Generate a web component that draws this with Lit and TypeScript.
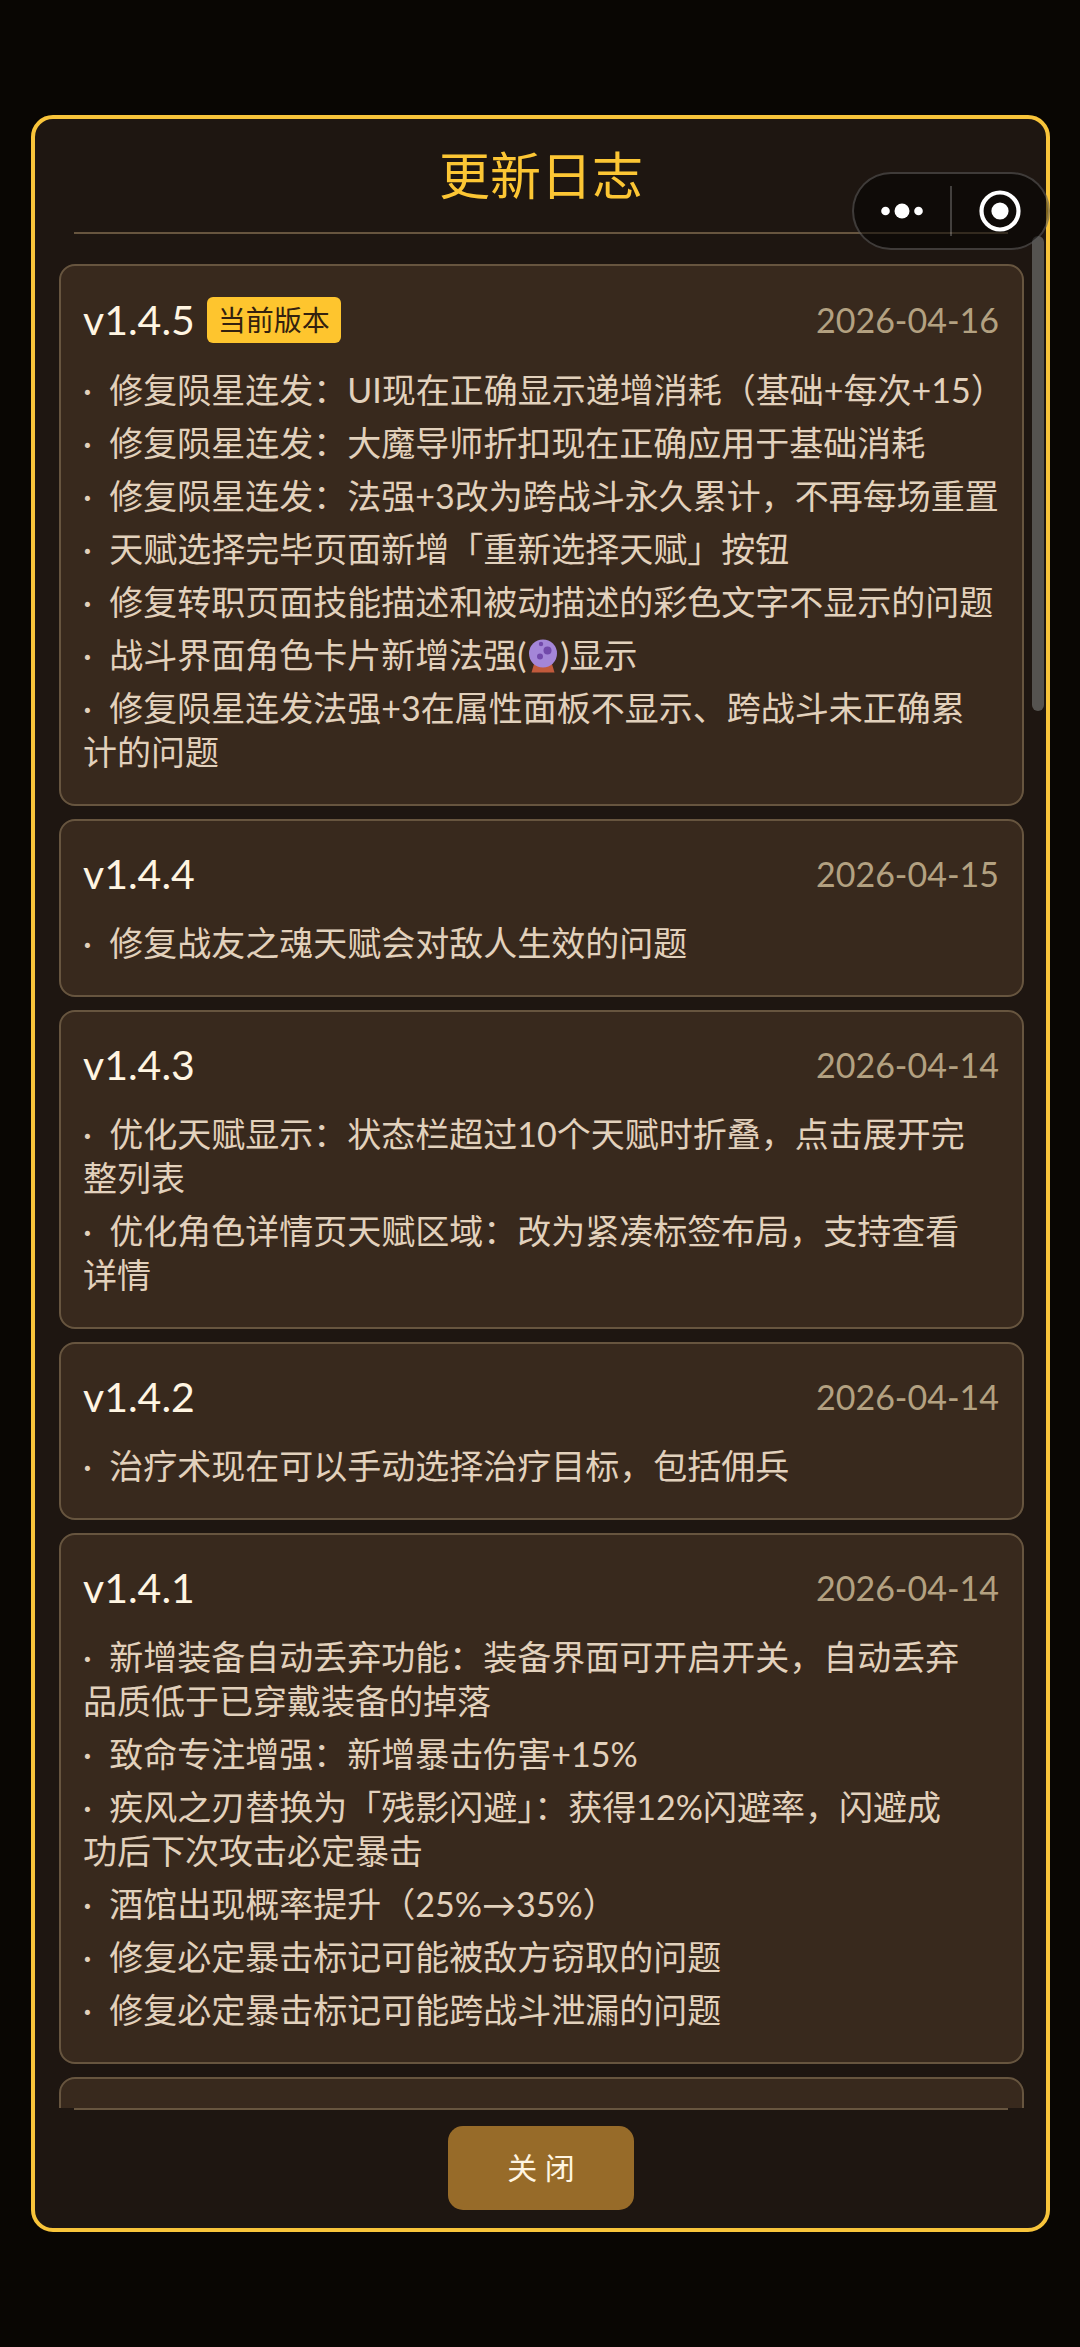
import { LitElement, html, css, svg } from "lit";
import { customElement, property } from "lit/decorators.js";

interface Release {
  version: string;
  date: string;
  current?: boolean;
  notes: string[];
}

/* A line feed inside a note is a forced line break; {orb} stands for the spell-power icon. */
const RELEASES: Release[] = [
  {
    version: "v1.4.5",
    date: "2026-04-16",
    current: true,
    notes: [
      "修复陨星连发：UI现在正确显示递增消耗（基础+每次+15）",
      "修复陨星连发：大魔导师折扣现在正确应用于基础消耗",
      "修复陨星连发：法强+3改为跨战斗永久累计，不再每场重置",
      "天赋选择完毕页面新增「重新选择天赋」按钮",
      "修复转职页面技能描述和被动描述的彩色文字不显示的问题",
      "战斗界面角色卡片新增法强({orb})显示",
      "修复陨星连发法强+3在属性面板不显示、跨战斗未正确累\n计的问题",
    ],
  },
  {
    version: "v1.4.4",
    date: "2026-04-15",
    notes: ["修复战友之魂天赋会对敌人生效的问题"],
  },
  {
    version: "v1.4.3",
    date: "2026-04-14",
    notes: [
      "优化天赋显示：状态栏超过10个天赋时折叠，点击展开完\n整列表",
      "优化角色详情页天赋区域：改为紧凑标签布局，支持查看\n详情",
    ],
  },
  {
    version: "v1.4.2",
    date: "2026-04-14",
    notes: ["治疗术现在可以手动选择治疗目标，包括佣兵"],
  },
  {
    version: "v1.4.1",
    date: "2026-04-14",
    notes: [
      "新增装备自动丢弃功能：装备界面可开启开关，自动丢弃\n品质低于已穿戴装备的掉落",
      "致命专注增强：新增暴击伤害+15%",
      "疾风之刃替换为「残影闪避」：获得12%闪避率，闪避成\n功后下次攻击必定暴击",
      "酒馆出现概率提升（25%→35%）",
      "修复必定暴击标记可能被敌方窃取的问题",
      "修复必定暴击标记可能跨战斗泄漏的问题",
    ],
  },
];

const orb = html`<svg class="orb" viewBox="0 0 34 34" role="img" aria-label="🔮">
  ${svg`
    <path d="M8 25 H26 L28.5 33.5 H5.5 Z" fill="#c25a3c"></path>
    <circle cx="17" cy="14.5" r="14" fill="#a486d8"></circle>
    <circle cx="15" cy="5" r="2.2" fill="#7249ab"></circle>
    <circle cx="21.5" cy="11.5" r="4" fill="#7249ab"></circle>
    <circle cx="14" cy="17.5" r="3" fill="#7249ab"></circle>
  `}
</svg>`;

@customElement("release-card")
export class ReleaseCard extends LitElement {
  @property({ attribute: false }) release?: Release;

  static styles = css`
    :host {
      display: block;
      flex: none;
      box-sizing: border-box;
      min-height: 178px;
      padding: 31px 23px 30px 22px;
      border: 2px solid #67553f;
      border-radius: 16px;
      background: #38291d;
    }
    .head {
      display: flex;
      align-items: center;
      justify-content: space-between;
      margin-bottom: 25px;
    }
    .name {
      display: flex;
      align-items: center;
      gap: 12px;
    }
    .version {
      margin: 0;
      font-size: 41px;
      font-weight: 400;
      line-height: 44px;
      color: #fff5e2;
    }
    .badge {
      padding: 0 11px;
      border-radius: 6px;
      background: #fec52e;
      color: #33210f;
      font-size: 28px;
      line-height: 46px;
    }
    .date {
      font-size: 34px;
      line-height: 44px;
      color: #b3a181;
    }
    .notes {
      display: flex;
      flex-direction: column;
      gap: 9px;
      margin: 0;
      padding: 0;
      list-style: none;
    }
    .note {
      white-space: pre;
      font-size: 34px;
      line-height: 44px;
      color: #e2d1bc;
    }
    .orb {
      width: 34px;
      height: 34px;
      vertical-align: -5px;
    }
  `;

  private note(text: string) {
    const [before, after] = `·  ${text}`.split("{orb}");
    return html`<li class="note">${before}${after === undefined ? "" : html`${orb}${after}`}</li>`;
  }

  render() {
    const r = this.release;
    if (!r) return html``;
    return html`
      <div class="head">
        <div class="name">
          <h2 class="version">${r.version}</h2>
          ${r.current ? html`<span class="badge">当前版本</span>` : ""}
        </div>
        <time class="date" datetime=${r.date}>${r.date}</time>
      </div>
      <ul class="notes">
        ${r.notes.map((n) => this.note(n))}
      </ul>
    `;
  }
}

@customElement("app-root")
export class AppRoot extends LitElement {
  static styles = css`
    :host {
      display: block;
      position: relative;
      box-sizing: border-box;
      height: 100vh;
      padding: 115px 30px 115px 31px;
      background: #090603;
      font-family: Lato, "Noto Sans CJK SC", sans-serif;
    }
    .panel {
      display: flex;
      flex-direction: column;
      box-sizing: border-box;
      height: 100%;
      border: 4px solid #f8c43a;
      border-radius: 22px;
      background: #1e1611;
    }
    .top {
      margin: 0 38px 0 39px;
      padding: 20px 0 19px;
      border-bottom: 2px solid #67553f;
    }
    .title {
      margin: 0;
      text-align: center;
      font-size: 51px;
      font-weight: 400;
      line-height: 74px;
      color: #fcc634;
    }
    .body {
      position: relative;
      display: flex;
      flex: 1;
      min-height: 0;
    }
    .list {
      display: flex;
      flex: 1;
      flex-direction: column;
      gap: 13px;
      padding: 30px 22px 0 24px;
      overflow-y: auto;
      scrollbar-width: none;
    }
    .thumb {
      position: absolute;
      top: 2px;
      right: 2px;
      width: 12px;
      height: 475px;
      border-radius: 6px;
      background: #555350;
    }
    .foot {
      display: flex;
      justify-content: center;
      margin: 0 38px 0 39px;
      padding: 16px 0 18px;
      border-top: 2px solid #67553f;
    }
    .close {
      min-width: 186px;
      height: 84px;
      padding: 0 0 4px;
      border: 0;
      border-radius: 15px;
      background: #976b29;
      color: #fff5e2;
      font: inherit;
      font-size: 30px;
      cursor: pointer;
    }
    .capsule {
      position: absolute;
      top: 172px;
      right: 30px;
      display: flex;
      align-items: center;
      box-sizing: border-box;
      width: 198px;
      height: 78px;
      border: 2px solid rgba(255, 255, 255, 0.2);
      border-radius: 39px;
      background: rgba(0, 0, 0, 0.5);
    }
    .tool {
      display: flex;
      flex: 1;
      align-items: center;
      justify-content: center;
      height: 100%;
      padding: 0;
      border: 0;
      background: none;
      cursor: pointer;
    }
    .rule {
      width: 2px;
      height: 50px;
      background: rgba(255, 255, 255, 0.22);
    }
  `;

  render() {
    return html`
      <main class="panel" lang="zh-CN">
        <header class="top"><h1 class="title">更新日志</h1></header>
        <div class="body">
          <div class="list">
            ${RELEASES.map((r) => html`<release-card .release=${r}></release-card>`)}
            <release-card></release-card>
          </div>
          <div class="thumb"></div>
        </div>
        <footer class="foot"><button class="close" type="button">关 闭</button></footer>
      </main>
      <div class="capsule">
        <button class="tool" type="button" aria-label="更多">
          <svg width="44" height="44" viewBox="0 0 44 44" fill="#fff">
            <circle cx="5.5" cy="22" r="4.3"></circle>
            <circle cx="22" cy="22" r="7.5"></circle>
            <circle cx="38.5" cy="22" r="4.3"></circle>
          </svg>
        </button>
        <span class="rule"></span>
        <button class="tool" type="button" aria-label="退出">
          <svg width="44" height="44" viewBox="0 0 44 44">
            <circle cx="22" cy="22" r="18.5" fill="none" stroke="#fff" stroke-width="4.2"></circle>
            <circle cx="22" cy="22" r="8.6" fill="#fff"></circle>
          </svg>
        </button>
      </div>
    `;
  }
}
